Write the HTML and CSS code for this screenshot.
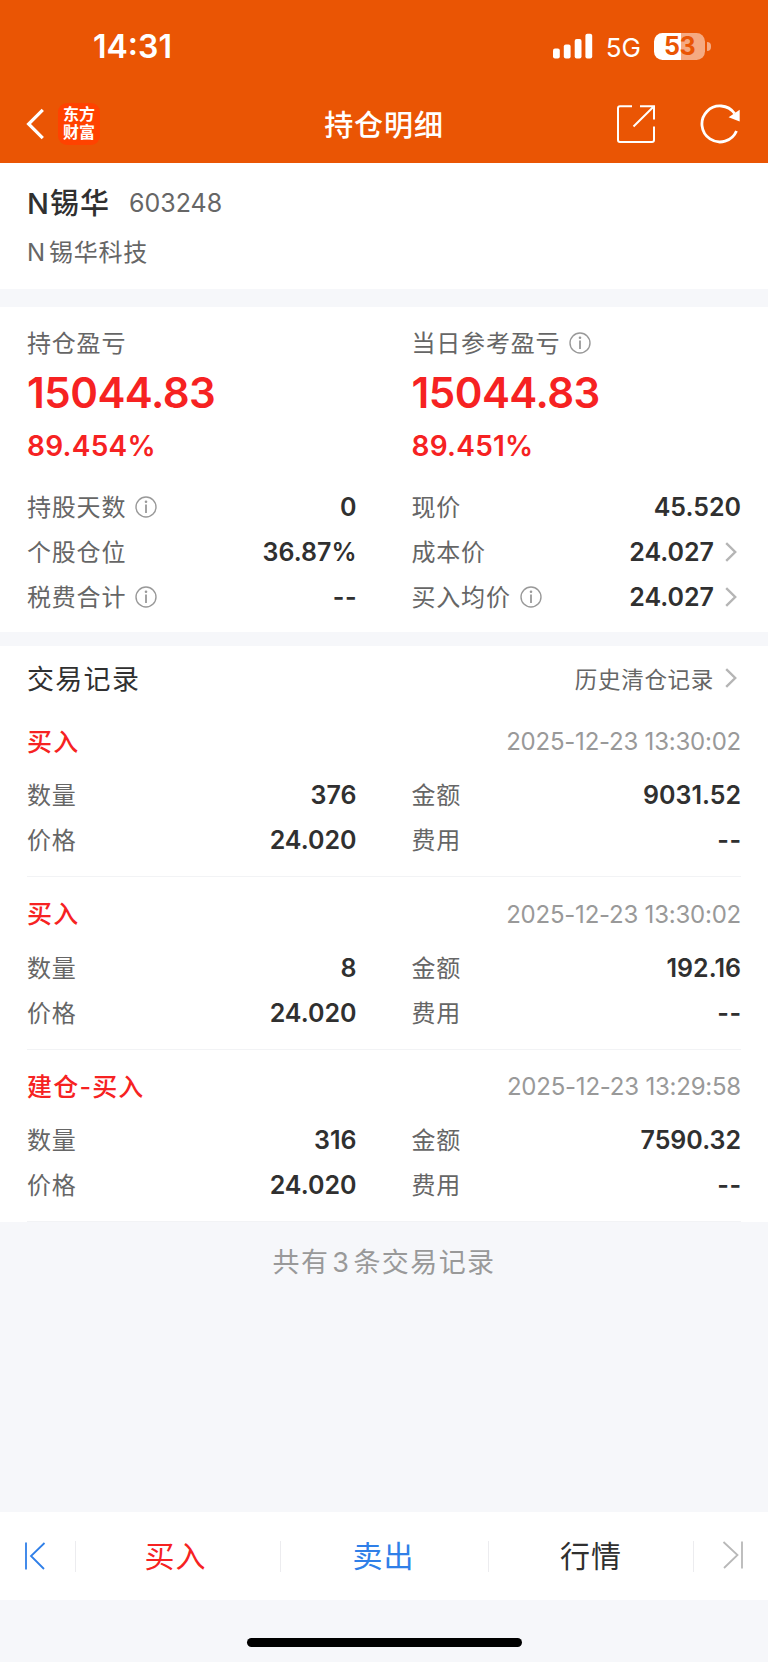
FILE: index.html
```html
<!DOCTYPE html>
<html lang="zh-CN">
<head>
    <meta charset="UTF-8">
    <meta name="viewport" content="width=device-width, initial-scale=1.0">
    <title>持仓明细</title>
    <link rel="stylesheet" href="styles.css">
</head>
<body>
    <svg class="sprite">
        <symbol id="info" viewBox="0 0 22 22">
            <circle cx="11" cy="11" r="10" fill="none" stroke="#999" stroke-width="1.4"/>
            <path d="M11 8.6V17" stroke="#999" stroke-width="1.8"/>
            <circle cx="11" cy="5.7" r="1.3" fill="#999"/>
        </symbol>
        <symbol id="arrow" viewBox="0 0 12 20">
            <path d="M1.2 1.2L10.2 10L1.2 18.8" fill="none" stroke="#b5b5b5" stroke-width="2.4"/>
        </symbol>
    </svg>

    <header class="header">
        <div class="status-bar">
            <span class="time">14:31</span>
            <div class="status-right">
                <svg class="signal" width="40" height="26" viewBox="0 0 40 26" fill="#fff">
                    <rect x="0" y="15.5" width="6.8" height="10" rx="2"/>
                    <rect x="10.8" y="11.5" width="6.8" height="14" rx="2"/>
                    <rect x="21.7" y="6" width="6.8" height="19.5" rx="2"/>
                    <rect x="32.4" y="0.7" width="6.8" height="24.8" rx="2"/>
                </svg>
                <span class="network">5G</span>
                <div class="battery">53</div>
                <div class="battery-tip"></div>
            </div>
        </div>
        <div class="nav-bar">
            <div class="nav-left">
                <svg width="18" height="32" viewBox="0 0 18 32">
                    <path d="M16.8 1.8L2.6 16L16.8 30.2" fill="none" stroke="#fff" stroke-width="3.2"/>
                </svg>
                <div class="logo">东方<br>财富</div>
            </div>
            <h1 class="nav-title">持仓明细</h1>
            <div class="nav-right">
                <svg width="40" height="40" viewBox="0 0 40 40" fill="none" stroke="#fff" stroke-width="2">
                    <path d="M16 2.3H4Q2 2.3 2 4.3V36Q2 38 4 38H36Q38 38 38 36V22.5"/>
                    <path d="M24 2.3H38V15.5M38 2.3L17.5 22.5"/>
                </svg>
                <svg width="42" height="40" viewBox="0 0 42 40">
                    <path d="M36.5 27A18 18 0 1 1 34.6 9.5" fill="none" stroke="#fff" stroke-width="2.8"/>
                    <path d="M39.7 5.8V17.6L28.6 13.2Z" fill="#fff"/>
                </svg>
            </div>
        </div>
    </header>

    <section class="stock">
        <div class="stock-top">
            <span class="stock-name">N锡华</span>
            <span class="stock-code">603248</span>
        </div>
        <div class="stock-full"><span class="latin">N</span>锡华科技</div>
    </section>

    <section class="position">
        <div class="columns">
            <div class="profit">
                <div class="profit-label">持仓盈亏</div>
                <div class="profit-value">15044.83</div>
                <div class="profit-rate">89.454%</div>
            </div>
            <div class="profit">
                <div class="profit-label">当日参考盈亏<svg class="info"><use href="#info"/></svg></div>
                <div class="profit-value">15044.83</div>
                <div class="profit-rate">89.451%</div>
            </div>
        </div>
        <div class="columns details">
            <div class="row"><span class="label">持股天数<svg class="info"><use href="#info"/></svg></span><span class="value">0</span></div>
            <div class="row"><span class="label">现价</span><span class="value">45.520</span></div>
            <div class="row"><span class="label">个股仓位</span><span class="value">36.87%</span></div>
            <div class="row"><span class="label">成本价</span><span class="value">24.027<svg class="arrow"><use href="#arrow"/></svg></span></div>
            <div class="row"><span class="label">税费合计<svg class="info"><use href="#info"/></svg></span><span class="value dash">--</span></div>
            <div class="row"><span class="label">买入均价<svg class="info"><use href="#info"/></svg></span><span class="value">24.027<svg class="arrow"><use href="#arrow"/></svg></span></div>
        </div>
    </section>

    <section class="records">
        <div class="records-head">
            <h2 class="records-title">交易记录</h2>
            <a class="history">历史清仓记录<svg class="arrow"><use href="#arrow"/></svg></a>
        </div>
        <div class="record">
            <div class="record-head">
                <span class="record-type">买入</span>
                <span class="record-time">2025-12-23 13:30:02</span>
            </div>
            <div class="columns">
                <div class="row"><span class="label">数量</span><span class="value">376</span></div>
                <div class="row"><span class="label">金额</span><span class="value">9031.52</span></div>
                <div class="row"><span class="label">价格</span><span class="value">24.020</span></div>
                <div class="row"><span class="label">费用</span><span class="value dash">--</span></div>
            </div>
        </div>
        <div class="record">
            <div class="record-head">
                <span class="record-type">买入</span>
                <span class="record-time">2025-12-23 13:30:02</span>
            </div>
            <div class="columns">
                <div class="row"><span class="label">数量</span><span class="value">8</span></div>
                <div class="row"><span class="label">金额</span><span class="value">192.16</span></div>
                <div class="row"><span class="label">价格</span><span class="value">24.020</span></div>
                <div class="row"><span class="label">费用</span><span class="value dash">--</span></div>
            </div>
        </div>
        <div class="record">
            <div class="record-head">
                <span class="record-type">建仓-买入</span>
                <span class="record-time">2025-12-23 13:29:58</span>
            </div>
            <div class="columns">
                <div class="row"><span class="label">数量</span><span class="value">316</span></div>
                <div class="row"><span class="label">金额</span><span class="value">7590.32</span></div>
                <div class="row"><span class="label">价格</span><span class="value">24.020</span></div>
                <div class="row"><span class="label">费用</span><span class="value dash">--</span></div>
            </div>
        </div>
    </section>

    <div class="total">共有<span class="count">3</span>条交易记录</div>

    <footer class="footer">
        <div class="tab-bar">
            <div class="tab-side">
                <svg width="22" height="28" viewBox="0 0 22 28" fill="none" stroke="#2f7fe8" stroke-width="1.8">
                    <path d="M2 0.5V27.5M20.5 1L7 14L20 27"/>
                </svg>
            </div>
            <div class="tab buy">买入</div>
            <div class="tab sell">卖出</div>
            <div class="tab quote">行情</div>
            <div class="tab-side last">
                <svg width="22" height="28" viewBox="0 0 22 28" fill="none" stroke="#b8b8b8" stroke-width="1.8">
                    <path d="M20 0.5V27.5M1.5 1L15.5 14L2 27"/>
                </svg>
            </div>
        </div>
        <div class="home-area">
            <div class="home-indicator"></div>
        </div>
    </footer>
</body>
</html>
```

FILE: styles.css
```css
* {
    box-sizing: border-box;
}
body {
    margin: 0;
    min-height: 1662px;
    display: flex;
    flex-direction: column;
    background: #f6f7fa;
    color: #303030;
    font-family: Inter, "Noto Sans CJK SC", sans-serif;
    white-space: nowrap;
}
svg {
    display: block;
    flex-shrink: 0;
}
.sprite {
    width: 0;
    height: 0;
    position: absolute;
}

/* header */
.header {
    height: 163px;
    background: #ea5504;
    color: #fff;
}
.status-bar {
    height: 92px;
    padding: 0 57px 0 93px;
    display: flex;
    justify-content: space-between;
    align-items: center;
}
.time {
    font-size: 32px;
    font-weight: 600;
}
.status-right {
    display: flex;
    align-items: center;
}
.network {
    margin: 2px 13px 0 13px;
    font-size: 26px;
}
.battery {
    width: 51px;
    height: 27px;
    border-radius: 8.5px;
    background: linear-gradient(to right, #fff 53%, #f5aa82 53%);
    color: #ea5504;
    font-size: 25px;
    font-weight: 700;
    line-height: 27px;
    letter-spacing: -0.5px;
    text-align: center;
}
.battery-tip {
    width: 4px;
    height: 9px;
    margin-left: 2px;
    border-radius: 0 4px 4px 0;
    background: #f5aa82;
}
.nav-bar {
    height: 64px;
    padding: 0 26px;
    display: grid;
    grid-template-columns: 1fr auto 1fr;
    align-items: center;
}
.nav-left {
    display: flex;
    align-items: center;
    gap: 14px;
}
.logo {
    width: 42px;
    height: 42px;
    padding-top: 2px;
    border-radius: 9px;
    background: #ff4200;
    font-size: 16px;
    font-weight: 700;
    line-height: 18px;
    text-align: center;
}
.nav-title {
    margin: 0;
    padding-bottom: 2px;
    font-size: 29px;
    font-weight: 500;
    letter-spacing: 0.9px;
}
.nav-right {
    display: flex;
    justify-content: flex-end;
    gap: 44px;
}

/* stock name */
.stock {
    height: 126px;
    padding: 18px 27px 0;
    background: #fff;
}
.stock-top {
    display: flex;
    align-items: center;
    gap: 19px;
    height: 44px;
}
.stock-name {
    padding-bottom: 4px;
    font-size: 29px;
    font-weight: 500;
    letter-spacing: 1px;
}
.stock-code {
    color: #666;
    font-size: 25px;
}
.stock-full {
    height: 56px;
    color: #666;
    font-size: 24px;
    line-height: 56px;
    letter-spacing: 0.8px;
}
.latin {
    margin-right: 3px;
}

/* position */
.position {
    height: 325px;
    margin-top: 18px;
    padding: 18px 27px 0;
    background: #fff;
}
.columns {
    display: grid;
    grid-template-columns: 1fr 1fr;
    column-gap: 55px;
}
.profit-label,
.label {
    display: flex;
    align-items: center;
    padding-bottom: 3px;
    color: #666;
    font-size: 24px;
    letter-spacing: 0.8px;
}
.profit-label {
    height: 36px;
}
.profit-value {
    height: 64px;
    color: #f62222;
    font-size: 42px;
    font-weight: 600;
    line-height: 64px;
    letter-spacing: -0.5px;
}
.profit-rate {
    height: 42px;
    color: #f62222;
    font-size: 28px;
    font-weight: 600;
    line-height: 42px;
    letter-spacing: 0.25px;
}
.details {
    margin-top: 17px;
}
.row {
    height: 45px;
    display: flex;
    justify-content: space-between;
    align-items: center;
}
.value {
    display: flex;
    align-items: center;
    font-size: 25px;
    font-weight: 600;
}
.dash {
    margin-right: -1px;
    letter-spacing: 0.8px;
}
.info {
    width: 22px;
    height: 22px;
    margin: 3px 0 0 9px;
}
.arrow {
    width: 12px;
    height: 20px;
    margin: 0 4px 0 11px;
}

/* trade records */
.records {
    margin-top: 14px;
    padding: 0 27px;
    background: #fff;
}
.records-head {
    height: 58.5px;
    padding-top: 6px;
    display: flex;
    justify-content: space-between;
    align-items: center;
}
.records-title {
    margin: 0;
    padding-bottom: 1px;
    font-size: 27px;
    font-weight: 400;
    letter-spacing: 1.3px;
}
.history {
    display: flex;
    align-items: center;
    color: #666;
    font-size: 22.5px;
    letter-spacing: 0.7px;
}
.record {
    height: 172.5px;
    border-bottom: 1px solid #f2f3f5;
}
.record-head {
    height: 68px;
    padding-top: 6px;
    display: flex;
    justify-content: space-between;
    align-items: center;
}
.record-type {
    padding-bottom: 4px;
    color: #f62222;
    font-size: 25px;
    font-weight: 500;
    letter-spacing: 1.2px;
}
.record-time {
    color: #999;
    font-size: 24px;
    letter-spacing: -0.22px;
}
.total {
    height: 81px;
    color: #999;
    font-size: 27px;
    line-height: 81px;
    letter-spacing: 1.4px;
    text-align: center;
}
.count {
    margin: 0 3px;
}

/* bottom bar */
.footer {
    margin-top: auto;
}
.tab-bar {
    height: 88px;
    display: grid;
    grid-template-columns: 75px 205px 208px 205px 75px;
    align-items: center;
    background: #fff;
}
.tab-side {
    padding-left: 24px;
}
.tab-side.last {
    height: 31px;
    padding-left: 28px;
    border-left: 1px solid #ececef;
}
.tab {
    height: 31px;
    border-left: 1px solid #ececef;
    font-size: 30px;
    line-height: 31px;
    letter-spacing: 1px;
    text-align: center;
}
.buy {
    padding-right: 5px;
    color: #f62222;
}
.sell {
    padding-right: 2px;
    color: #2f7fe8;
}
.home-area {
    height: 62px;
    padding-top: 38px;
}
.home-indicator {
    width: 275px;
    height: 9px;
    margin: 0 auto;
    border-radius: 5px;
    background: #000;
}
```
